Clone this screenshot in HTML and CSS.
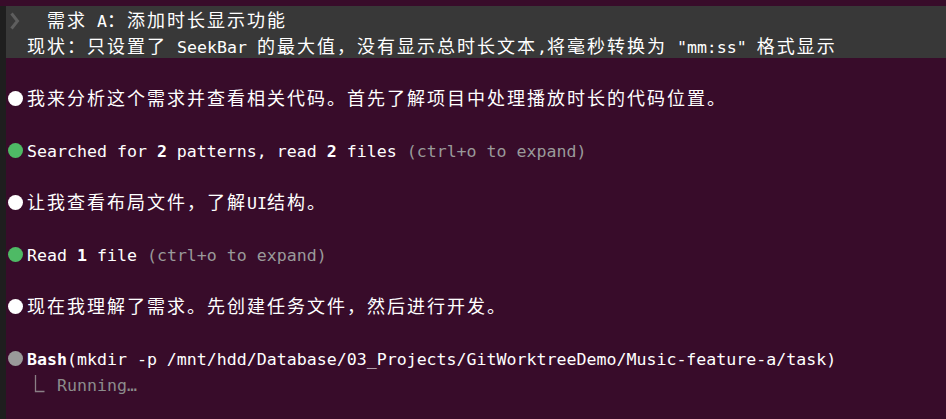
FILE: index.html
```html
<!DOCTYPE html>
<html lang="zh-CN">
<head>
<meta charset="utf-8">
<title>Terminal</title>
<link rel="stylesheet" href="styles.css">
</head>
<body>
<div class="term">
  <div class="strip"></div>
  <div class="screen">
    <div class="band">
      <div class="row"><svg class="icon2" width="20" height="26" viewBox="0 3 20 26"><polyline points="4.5,7.5 10.5,15 4.5,22.5" fill="none" stroke="#5e5e5e" stroke-width="3" stroke-linejoin="miter"/></svg>  <span class="c">需求</span> A<span class="c">：添加时长显示功能</span></div>
      <div class="row">  <span class="c">现状：只设置了</span> SeekBar <span class="c">的最大值，没有显示总时长文本</span>,<span class="c">将毫秒转换为</span> "mm:ss" <span class="c">格式显示</span></div>
    </div>
    <div class="row"></div>
    <div class="row"><svg class="icon2" width="20" height="26" viewBox="0 3 20 26"><circle cx="8.5" cy="14.5" r="7.5" fill="#ffffff"/></svg><span class="c">我来分析这个需求并查看相关代码。首先了解项目中处理播放时长的代码位置。</span></div>
    <div class="row"></div>
    <div class="row"><svg class="icon2" width="20" height="26" viewBox="0 3 20 26"><circle cx="8.5" cy="14.5" r="7.5" fill="#4eba65"/></svg>Searched for <b>2</b> patterns, read <b>2</b> files <span class="dim">(ctrl+o to expand)</span></div>
    <div class="row"></div>
    <div class="row"><svg class="icon2" width="20" height="26" viewBox="0 3 20 26"><circle cx="8.5" cy="14.5" r="7.5" fill="#ffffff"/></svg><span class="c">让我查看布局文件，了解</span>UI<span class="c">结构。</span></div>
    <div class="row"></div>
    <div class="row"><svg class="icon2" width="20" height="26" viewBox="0 3 20 26"><circle cx="8.5" cy="14.5" r="7.5" fill="#4eba65"/></svg>Read <b>1</b> file <span class="dim">(ctrl+o to expand)</span></div>
    <div class="row"></div>
    <div class="row"><svg class="icon2" width="20" height="26" viewBox="0 3 20 26"><circle cx="8.5" cy="14.5" r="7.5" fill="#ffffff"/></svg><span class="c">现在我理解了需求。先创建任务文件，然后进行开发。</span></div>
    <div class="row"></div>
    <div class="row"><svg class="icon2" width="20" height="26" viewBox="0 3 20 26"><circle cx="8.5" cy="14.5" r="7.5" fill="#9a9a9a"/></svg><b>Bash</b>(mkdir -p /mnt/hdd/Database/03_Projects/GitWorktreeDemo/Music-feature-a/task)</div>
    <div class="row dim2">  <svg class="icon2" width="20" height="26" viewBox="0 3 20 26"><path d="M8.5 5 V21.5 H17.5" fill="none" stroke="#8a7f86" stroke-width="1.3"/></svg> Running…</div>
  </div>
</div>
</body>
</html>
```

FILE: styles.css
```css
html, body {
  margin: 0;
  padding: 0;
}
body {
  width: 946px;
  height: 419px;
  overflow: hidden;
  background: #380c2a;
  font-family: "DejaVu Sans Mono", "Noto Sans CJK SC", monospace;
  font-size: 16.6px;
  color: #ffffff;
}
.term {
  display: flex;
  margin-top: 6px;
  height: 413px;
}
.strip {
  width: 6px;
  flex: none;
  background: #1e1e1e;
}
.screen {
  flex: 1;
  padding-left: 1px;
}
.band {
  background: #383838;
  margin-left: -1px;
  padding-left: 1px;
}
.row {
  box-sizing: border-box;
  height: 26px;
  padding-top: 3px;
  line-height: 26px;
  white-space: pre;
  overflow: visible;
}
.c {
  font-family: "Noto Sans CJK SC", sans-serif;
  font-size: 18px;
  letter-spacing: 2px;
  line-height: 0;
}
b {
  font-weight: bold;
}
.dim {
  color: #9a9a9a;
}
.dim2 {
  color: #8c8c8c;
}
.icon2 {
  display: inline-block;
  vertical-align: top;
  width: 20px;
  height: 26px;
}
```
